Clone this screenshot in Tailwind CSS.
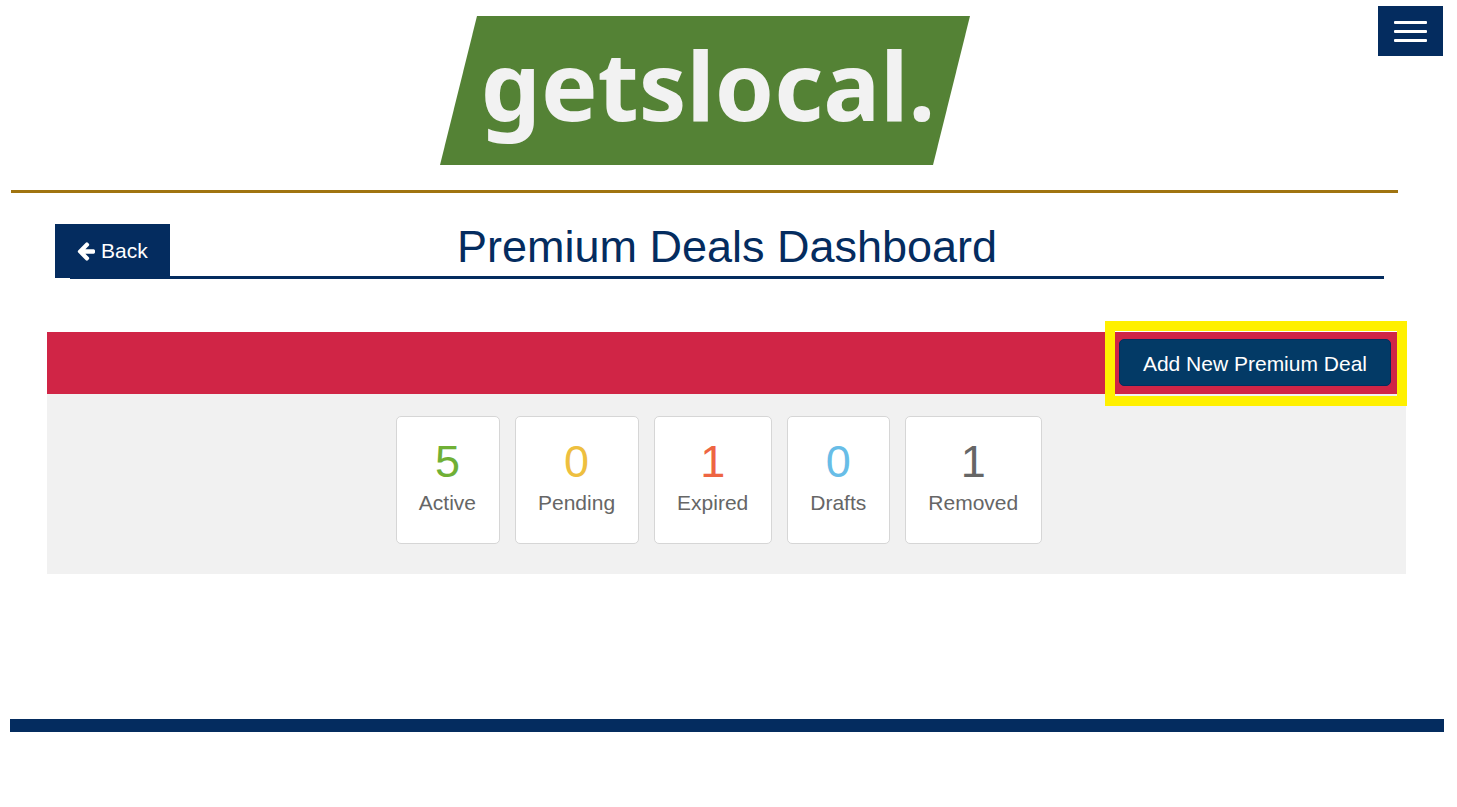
<!DOCTYPE html>
<html lang="en">
<head>
    <meta charset="UTF-8">
    <meta name="viewport" content="width=device-width, initial-scale=1.0">
    <title>Premium Deals Dashboard</title>
    <script src="https://cdn.jsdelivr.net/npm/@tailwindcss/browser@4"></script>
</head>
<body class="bg-white font-['Liberation_Sans',Arial,sans-serif] text-[21px] leading-[30px] text-[#666666]">
    <!-- Header -->
    <header class="relative">
        <div class="ml-[11px] mr-[59px] pt-4 pb-[25px] border-b-3 border-[#a07410]">
            <a href="#" aria-label="getslocal home" class="block">
                <svg class="block mx-auto" width="530" height="149" viewBox="0 0 530 149">
                    <polygon points="37,0 530,0 493,149 0,149" fill="#548235"/>
                    <text x="268" y="105" text-anchor="middle" font-family="'Noto Sans', sans-serif" font-weight="700" font-size="95" fill="#f2f2f2">getslocal.</text>
                </svg>
            </a>
        </div>
        <button type="button" aria-label="Menu" class="absolute top-[6px] right-[14px] w-[65px] h-[50px] bg-[#042c5f] flex flex-col items-center justify-center gap-[6px]">
            <span class="w-[33px] h-[3px] rounded-[1px] bg-white"></span>
            <span class="w-[33px] h-[3px] rounded-[1px] bg-white"></span>
            <span class="w-[33px] h-[3px] rounded-[1px] bg-white"></span>
        </button>
    </header>

    <main>
        <!-- Page title -->
        <div class="grid items-start mt-[31px] ml-[55px] mr-[73px]">
            <h1 class="col-start-1 row-start-1 ml-[15px] pb-[7px] border-b-3 border-[#042c5f] text-center text-[45px] leading-[45px] text-[#042c5f]">Premium Deals Dashboard</h1>
            <a href="#" class="col-start-1 row-start-1 justify-self-start flex items-center gap-[6px] h-[54px] px-[22px] bg-[#042c5f] text-white">
                <svg width="18" height="21" viewBox="0 64 1536 1792" fill="currentColor">
                    <path d="M1536 896v128q0 53-32.5 90.5t-84.5 37.5h-704l293 294q38 36 38 90t-38 90l-75 76q-37 37-90 37-52 0-91-37l-651-652q-37-37-37-90 0-52 37-91l651-650q38-38 91-38 52 0 90 38l75 74q38 38 38 91t-38 91l-293 293h704q52 0 84.5 37.5t32.5 90.5z"/>
                </svg>
                Back
            </a>
        </div>

        <!-- Deals panel -->
        <section class="mt-[53px] ml-[47px] mr-[51px] bg-[#f1f1f1]">
            <div class="relative flex items-start justify-end h-[62px] pt-[7px] pr-[15px] bg-[#d02546]">
                <button type="button" class="h-[47px] px-[23px] pt-[2px] rounded-[5px] border border-[#042c5f] bg-[#033a66] text-white">Add New Premium Deal</button>
                <div class="absolute -top-[11px] -right-px w-[302px] h-[85px] border-10 border-[#fff000] pointer-events-none"></div>
            </div>
            <ul class="flex justify-center pt-[22px] pb-[30px] text-center">
                <li class="mr-[15px] pl-[22px] pr-[23px] pt-[22px] pb-[25px] bg-white border border-[#d6d6d6] rounded-[5px]">
                    <div class="text-[45px] leading-[46px] text-[#70b035]">5</div>
                    <div class="mt-[3px]">Active</div>
                </li>
                <li class="mr-[15px] pl-[22px] pr-[23px] pt-[22px] pb-[25px] bg-white border border-[#d6d6d6] rounded-[5px]">
                    <div class="text-[45px] leading-[46px] text-[#eebf3f]">0</div>
                    <div class="mt-[3px]">Pending</div>
                </li>
                <li class="mr-[15px] pl-[22px] pr-[23px] pt-[22px] pb-[25px] bg-white border border-[#d6d6d6] rounded-[5px]">
                    <div class="text-[45px] leading-[46px] text-[#ee6542]">1</div>
                    <div class="mt-[3px]">Expired</div>
                </li>
                <li class="mr-[15px] pl-[22px] pr-[23px] pt-[22px] pb-[25px] bg-white border border-[#d6d6d6] rounded-[5px]">
                    <div class="text-[45px] leading-[46px] text-[#68bde7]">0</div>
                    <div class="mt-[3px]">Drafts</div>
                </li>
                <li class="mr-[15px] pl-[22px] pr-[23px] pt-[22px] pb-[25px] bg-white border border-[#d6d6d6] rounded-[5px]">
                    <div class="text-[45px] leading-[46px]">1</div>
                    <div class="mt-[3px]">Removed</div>
                </li>
            </ul>
        </section>
    </main>

    <footer class="mt-[145px] ml-[10px] mr-[13px] h-[13px] bg-[#042c5f]"></footer>
</body>
</html>
